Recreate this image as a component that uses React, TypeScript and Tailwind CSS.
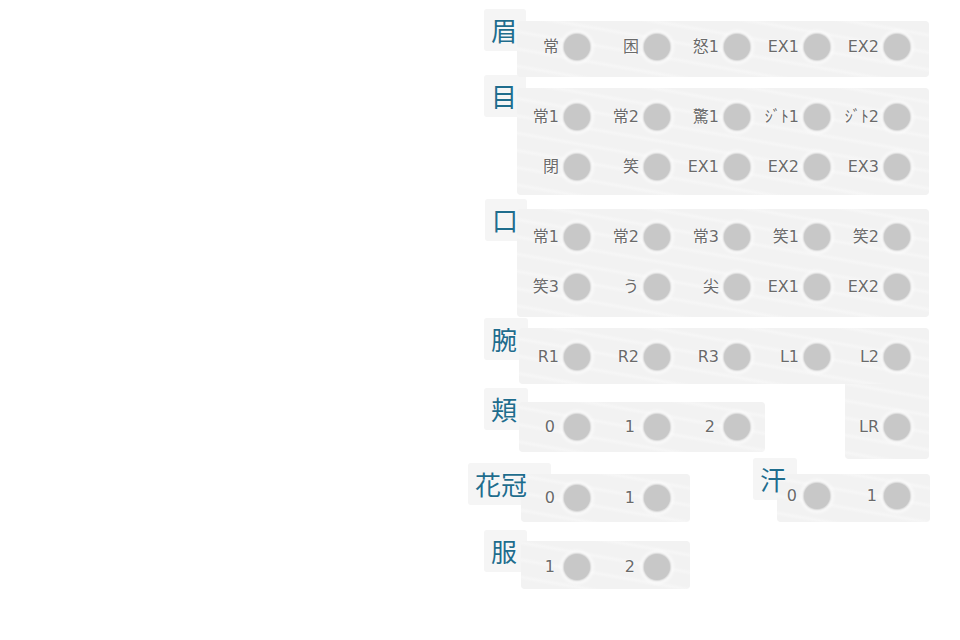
import React from "react";

type Row = string[];

const Dot = () => (
  <span className="block w-[26px] h-[26px] shrink-0 rounded-full bg-[#c8c8c8] shadow-[0_0_2px_1px_#cfcfcf,0_0_4px_3px_rgba(255,255,255,0.95)]" />
);

const Cell = ({ label, gap }: { label: string; gap: string }) => (
  <div className={`w-[60px] shrink-0 flex items-center justify-end ${gap}`}>
    <span className="text-[16px] leading-none text-[#6a6a6a] whitespace-nowrap font-['DejaVu_Sans','Noto_Sans_CJK_JP',sans-serif] [text-shadow:0_0_2px_#fff,0_0_2px_#fff,0_0_1px_#fff]">
      {label}
    </span>
    <Dot />
  </div>
);

const Panel = ({
  rows,
  className,
  rowH = "h-[50px]",
  inner = "",
  gap = "gap-[5px]",
}: {
  rows: Row[];
  className: string;
  rowH?: string;
  inner?: string;
  gap?: string;
}) => (
  <div
    className={`relative z-10 shrink-0 rounded-[4px] bg-[#f2f2f2] bg-[repeating-linear-gradient(190deg,#f2f2f2_0px,#f2f2f2_11px,#f6f6f6_14px,#f2f2f2_17px)] ${className}`}
  >
    {rows.map((row, i) => (
      <div key={i} className={`flex items-center gap-[20px] ${rowH} ${inner}`}>
        {row.map((label) => (
          <Cell key={label} label={label} gap={gap} />
        ))}
      </div>
    ))}
  </div>
);

// box sits behind the panel, the glyphs sit above it
const Tag = ({ text, className }: { text: string; className: string }) => (
  <>
    <div className={`absolute z-0 h-[42px] rounded-[3px] bg-[#f5f5f5] ${className}`} />
    <div
      className={`absolute z-20 h-[42px] pl-[7px] flex items-center text-[26px] leading-none text-[#1f6d8d] [text-shadow:0_0_2px_#fff] ${className}`}
    >
      {text}
    </div>
  </>
);

export default function App() {
  return (
    <div className="w-[960px] h-[640px] bg-white overflow-hidden font-['Noto_Sans_CJK_JP',sans-serif]">
      <div className="ml-[468px] w-[470px] flex flex-col">
        {/* 眉 */}
        <div className="relative mt-[21px]">
          <Panel
            className="ml-[49px] w-[412px] h-[56px] pt-[1px] pl-[13px]"
            rows={[["常", "困", "怒1", "EX1", "EX2"]]}
          />
          <Tag text="眉" className="left-[16px] top-[-12px] w-[42px]" />
        </div>

        {/* 目 */}
        <div className="relative mt-[11px]">
          <Panel
            className="ml-[49px] w-[412px] h-[107px] pt-[4px] pl-[13px]"
            rows={[
              ["常1", "常2", "驚1", "ｼﾞﾄ1", "ｼﾞﾄ2"],
              ["閉", "笑", "EX1", "EX2", "EX3"],
            ]}
          />
          <Tag text="目" className="left-[16px] top-[-13px] w-[42px]" />
        </div>

        {/* 口 */}
        <div className="relative mt-[14px]">
          <Panel
            className="ml-[49px] w-[412px] h-[108px] pt-[3px] pl-[13px]"
            rows={[
              ["常1", "常2", "常3", "笑1", "笑2"],
              ["笑3", "う", "尖", "EX1", "EX2"],
            ]}
          />
          <Tag text="口" className="left-[17px] top-[-10px] w-[42px]" />
        </div>

        {/* 腕 */}
        <div className="relative mt-[11px]">
          <Panel
            className="ml-[51px] w-[410px] h-[56px] pt-[4px] pl-[11px] rounded-br-none"
            rows={[["R1", "R2", "R3", "L1", "L2"]]}
          />
          <Tag text="腕" className="left-[16px] top-[-10px] w-[44px]" />
        </div>

        {/* 頬 */}
        <div className="relative flex items-start">
          <Panel
            className="ml-[51px] mt-[18px] w-[246px] h-[50px] pl-[11px]"
            gap="gap-[9px]"
            rows={[["0", "1", "2"]]}
          />
          <Panel
            className="ml-[80px] w-[84px] h-[75px] pt-[18px] pl-[5px] rounded-t-none"
            rows={[["LR"]]}
          />
          <Tag text="頬" className="left-[16px] top-[4px] w-[44px]" />
        </div>

        {/* 花冠 / 汗 */}
        <div className="relative flex items-start mt-[15px]">
          <Panel
            className="ml-[53px] w-[169px] h-[48px] pl-[9px]"
            rowH="h-[48px]"
            gap="gap-[9px]"
            rows={[["0", "1"]]}
          />
          <Panel
            className="ml-[87px] w-[153px] h-[48px]"
            rowH="h-[44px]"
            inner="-ml-[7px]"
            gap="gap-[7px]"
            rows={[["0", "1"]]}
          />
          <Tag text="花冠" className="left-[0px] top-[-11px] w-[83px]" />
          <Tag text="汗" className="left-[285px] top-[-16px] w-[44px]" />
        </div>

        {/* 服 */}
        <div className="relative mt-[19px]">
          <Panel
            className="ml-[53px] w-[169px] h-[48px] pt-[1px] pl-[9px]"
            gap="gap-[9px]"
            rows={[["1", "2"]]}
          />
          <Tag text="服" className="left-[16px] top-[-11px] w-[43px]" />
        </div>
      </div>
    </div>
  );
}
